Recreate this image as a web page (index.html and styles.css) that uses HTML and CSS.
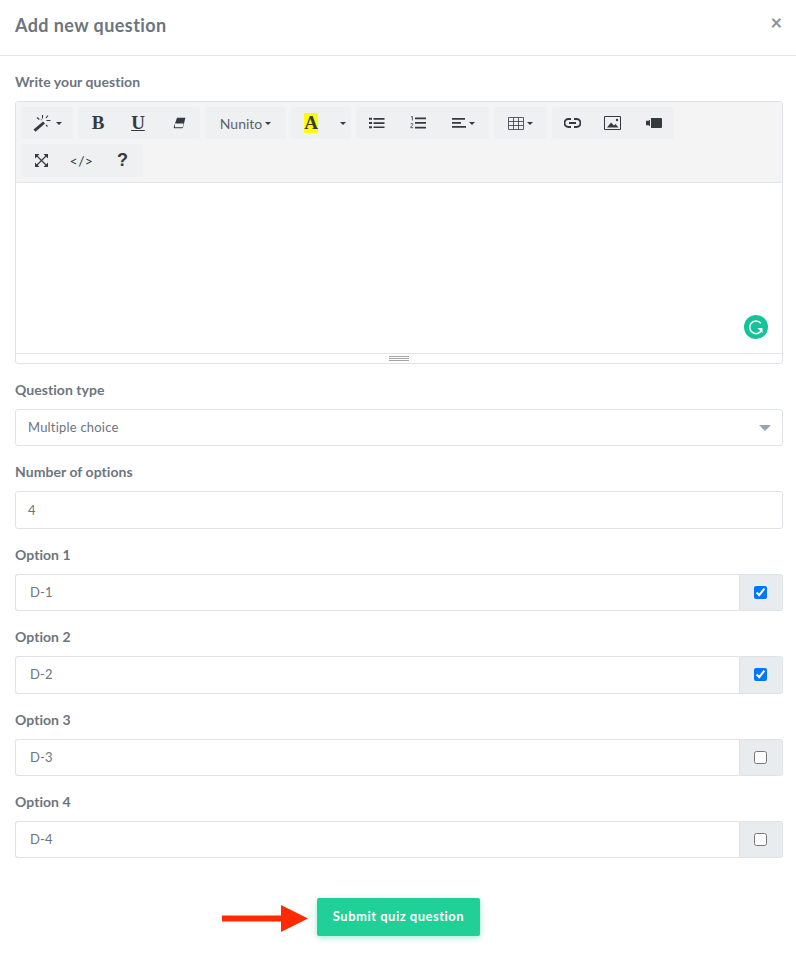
FILE: index.html
```html
<!DOCTYPE html>
<html lang="en">
<head>
<meta charset="utf-8">
<title>Add new question</title>
<link rel="stylesheet" href="styles.css">
</head>
<body>
<div class="modal">
  <header class="modal-head">
    <h1 class="modal-title">Add new question</h1>
    <span class="close">×</span>
  </header>
  <form class="modal-body">
    <div class="field">
      <label class="label">Write your question</label>
      <div class="editor">
        <div class="toolbar">
          <div class="row">
            <div class="group">
              <button type="button" class="btn w52">
                <svg width="20" height="18" viewBox="0 0 20 18"><path d="M0.500 15.500 L10 7.500 L12 9.500 L2.500 17.800Z" fill="#343a40"/><path d="M9.500 1v3.500M15 1.500l-2 2.500M4 3.500l2.300 2M13.500 6.500h4M13 11l1.500 1.500M8 5.500l.5.5" stroke="#343a40" stroke-width="1.100" fill="none"/></svg>
                <span class="caret"></span>
              </button>
            </div>
            <div class="group">
              <button type="button" class="btn glyph w40">B</button>
              <button type="button" class="btn glyph under w40">U</button>
              <button type="button" class="btn w42"><svg width="13" height="12" viewBox="0 0 13 12"><path d="M4 .8 H12.400 L10 10.600 a1 1 0 0 1-1 .7 H1.800 a1 1 0 0 1-1-1.200Z" fill="#343a40"/><path d="M2 6.600 H10.600 L9.700 10.200 H2Z" fill="#eef0f2"/></svg></button>
            </div>
            <div class="group">
              <button type="button" class="btn font-btn">Nunito<span class="caret"></span></button>
            </div>
            <div class="group">
              <button type="button" class="btn glyph w40"><span class="hl">A</span></button>
              <button type="button" class="btn w20"><span class="caret"></span></button>
            </div>
            <div class="group">
              <button type="button" class="btn w42"><svg width="16" height="12" viewBox="0 0 16 12"><path d="M0 .8h3v2H0zM0 5h3v2H0zM0 9.200h3v2H0zM4.500 1h11v1.700h-11zM4.500 5.200h11v1.700h-11zM4.500 9.400h11v1.700h-11z" fill="#343a40"/></svg></button>
              <button type="button" class="btn w40"><svg width="16" height="14" viewBox="0 0 16 14"><path d="M5 1.500h11v1.800H5zM5 6h11v1.800H5zM5 10.700h11v1.800H5z" fill="#343a40"/><path d="M1 1 L2.400.4V4.500M.6 8.200c.4-1.200 2.400-1 2.300.2 0 1-1.900 1.600-2.200 3.300h2.500" stroke="#343a40" stroke-width=".8" fill="none"/></svg></button>
              <button type="button" class="btn w51"><svg width="14" height="10" viewBox="0 0 14 10"><path d="M0 0h13v1.800H0zM0 4h9v1.800H0zM0 8h14v1.800H0z" fill="#343a40"/></svg><span class="caret"></span></button>
            </div>
            <div class="group">
              <button type="button" class="btn w53"><svg width="16" height="13" viewBox="0 0 16 13"><path d="M.5.500h15v12H.5zM.5 4.500h15M.5 8.500h15M5.500.5v12M10.500.5v12" stroke="#343a40" stroke-width=".8" fill="none"/></svg><span class="caret"></span></button>
            </div>
            <div class="group">
              <button type="button" class="btn w40"><svg width="17" height="10" viewBox="0 0 17 10"><path d="M7 1H4.500a4 4 0 0 0 0 8H7M10 1h2.500a4 4 0 0 1 0 8H10M5 5h7" stroke="#343a40" stroke-width="1.900" fill="none"/></svg></button>
              <button type="button" class="btn w41"><svg width="17" height="14" viewBox="0 0 17 14"><path d="M.5.500h16v13H.5z" stroke="#343a40" stroke-width="1" fill="none"/><path d="M3 11.500l4-5 3 3 1.500-1.500 3 3.500z" fill="#343a40"/><circle cx="13" cy="4" r="1.200" fill="#343a40"/></svg></button>
              <button type="button" class="btn w41"><svg width="16" height="10" viewBox="0 0 16 10"><path d="M5 0h10a1 1 0 0 1 1 1v8a1 1 0 0 1-1 1H5zM0 2.800h2.500l1.500-1v6.400l-1.500-1H0z" fill="#343a40"/></svg></button>
            </div>
          </div>
          <div class="row">
            <div class="group tall">
              <button type="button" class="btn w40"><svg width="13" height="13" viewBox="0 0 13 13"><path d="M1.500 1.500 L11.500 11.500M11.500 1.500 L1.500 11.500" stroke="#343a40" stroke-width="1.200" fill="none"/><path d="M0 0h4.500L0 4.500zM13 0v4.500L8.500 0zM0 13v-4.500L4.500 13zM13 13H8.500L13 8.500z" fill="#343a40"/></svg></button>
              <button type="button" class="btn code w41">&lt;/&gt;</button>
              <button type="button" class="btn glyph help w41">?</button>
            </div>
          </div>
        </div>
        <div class="edit-area">
          <span class="grammarly"><svg width="24" height="24" viewBox="0 0 24 24"><circle cx="12" cy="12" r="12" fill="#15c39a"/><path d="M16.800 8.200A6.300 6.300 0 1 0 17.500 15.500" stroke="#fff" stroke-width="1.500" fill="none"/><path d="M13.500 13h5v5z" fill="#fff"/></svg></span>
        </div>
        <div class="status"><span class="grip"></span></div>
      </div>
    </div>
    <div class="field">
      <label class="label">Question type</label>
      <div class="select-wrap">
        <select class="control select"><option>Multiple choice</option></select>
      </div>
    </div>
    <div class="field">
      <label class="label">Number of options</label>
      <input class="control" type="text" value="4">
    </div>
    <div class="field">
      <label class="label">Option 1</label>
      <div class="input-group"><input class="control" type="text" value="D-1"><span class="addon"><input type="checkbox" checked></span></div>
    </div>
    <div class="field">
      <label class="label">Option 2</label>
      <div class="input-group"><input class="control" type="text" value="D-2"><span class="addon"><input type="checkbox" checked></span></div>
    </div>
    <div class="field">
      <label class="label">Option 3</label>
      <div class="input-group"><input class="control" type="text" value="D-3"><span class="addon"><input type="checkbox"></span></div>
    </div>
    <div class="field">
      <label class="label">Option 4</label>
      <div class="input-group"><input class="control" type="text" value="D-4"><span class="addon"><input type="checkbox"></span></div>
    </div>
    <div class="actions">
      <div class="submit-wrap">
        <svg class="arrow" width="86" height="27" viewBox="0 0 86 27"><path d="M0 10.500H59V0L86 13.500 59 27V16.500H0z" fill="#ff2a00"/></svg>
        <button type="button" class="submit">Submit quiz question</button>
      </div>
    </div>
  </form>
</div>
</body>
</html>
```
FILE: styles.css
```css
* { box-sizing: border-box; }
html, body { margin: 0; padding: 0; background: #fff; }
body { font-family: "Lato", "Liberation Sans", sans-serif; font-size: 13px; color: #6c757d; }
.modal { width: 796px; height: 977px; }
.modal-head { height: 56px; border-bottom: 1px solid #e3e5e7; display: flex; justify-content: space-between; align-items: flex-start; padding: 14px 14px 0 15px; }
.modal-title { margin: 0; font-size: 18px; line-height: 22px; font-weight: 700; color: #6c757d; letter-spacing: .42px; }
.close { font-size: 20px; line-height: 17px; font-weight: 700; color: #8a9298; }
.modal-body { padding: 17px 13px 0 15px; display: flex; flex-direction: column; }
.field { margin-bottom: 17px; }
.label { display: block; height: 20px; line-height: 17px; margin-bottom: 8px; font-size: 14px; font-weight: 700; color: #6c757d; letter-spacing: .05px; }
.editor { position: relative; border: 1px solid #dfe2e6; border-radius: 3px; height: 263px; display: flex; flex-direction: column; }
.toolbar { height: 81px; background: #f4f4f5; border-bottom: 1px solid #e3e6e8; padding: 5px 0 0 5px; display: flex; flex-direction: column; gap: 5px; }
.row { display: flex; gap: 5px; }
.group { display: flex; height: 32px; background: #eef0f2; border-radius: 3px; }
.tall { height: 33px; }
.btn { border: 0; background: transparent; height: 100%; padding: 0; display: flex; align-items: center; justify-content: center; color: #343a40; font-family: "Lato", sans-serif; font-size: 13px; }
.w20 { width: 20px; }
.w40 { width: 40px; }
.w41 { width: 41px; }
.w42 { width: 42px; }
.w51 { width: 51px; }
.w52 { width: 52px; }
.w53 { width: 53px; }
.glyph { font-family: "Liberation Serif", serif; font-weight: 700; font-size: 19px; }
.under { text-decoration: underline; }
.font-btn { width: 81px; color: #5c6369; font-size: 14px; }
.hl { background: #ff0; width: 14px; height: 20px; line-height: 20px; display: block; text-align: center; font-size: 19px; }
.caret { display: inline-block; width: 0; height: 0; border-left: 3.500px solid transparent; border-right: 3.500px solid transparent; border-top: 3.500px solid #343a40; margin-left: 3px; }
.code { font-size: 14px; letter-spacing: .4px; }
.help { font-family: "Liberation Sans", sans-serif; font-size: 18px; }
.edit-area { position: relative; height: 171px; border-bottom: 1px solid #e3e5e7; background: #fff; }
.grammarly { position: absolute; right: 14px; bottom: 14px; width: 24px; height: 24px; }
.grammarly svg { display: block; }
.status { flex: 1; display: flex; align-items: center; justify-content: center; }
.grip { display: block; width: 20px; height: 5px; border-top: 1px solid #a5a5a5; border-bottom: 1px solid #a5a5a5; background: linear-gradient(#a5a5a5, #a5a5a5) center / 100% 1px no-repeat; }
.control { display: block; width: 100%; height: 37.400px; border: 1px solid #dfe2e6; border-radius: 3px; background: #fff; padding: 0 12px 1px; font-family: "Lato", sans-serif; font-size: 13px; color: #6c757d; letter-spacing: .2px; outline: 0; }
.select-wrap { position: relative; }
.select { appearance: none; -webkit-appearance: none; }
.select-wrap::after { content: ""; position: absolute; right: 12px; top: 16px; width: 0; height: 0; border-left: 6px solid transparent; border-right: 6px solid transparent; border-top: 6px solid #9aa4ac; }
.input-group { display: flex; }
.input-group .control { flex: 1; min-width: 0; border-right: 0; border-radius: 3px 0 0 3px; padding: 0 14px 1px; }
.addon { width: 44px; height: 37.400px; flex: none; background: #e9ecef; border: 1px solid #dfe2e6; border-radius: 0 3px 3px 0; padding-right: 2px; display: flex; align-items: center; justify-content: center; }
.addon input { margin: 0; width: 13px; height: 13px; }
.actions { display: flex; justify-content: center; padding: 23px 1px 0 0; }
.submit-wrap { position: relative; }
.submit { display: block; width: 163px; height: 38px; padding: 0 0 2px; border: 0; border-radius: 2px; background: #20d096; color: #fff; font-family: "Lato", sans-serif; font-size: 13px; font-weight: 700; letter-spacing: .5px; box-shadow: 0 2px 6px rgba(32, 208, 150, .4); }
.arrow { position: absolute; left: -95px; top: 7px; }
```
